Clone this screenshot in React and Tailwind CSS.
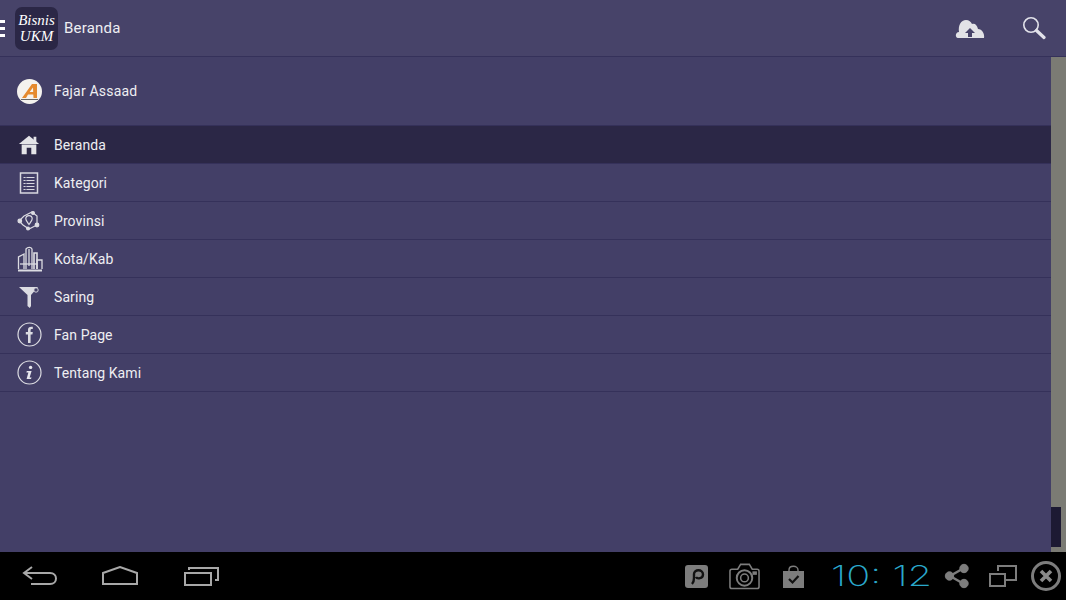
import React from 'react'

const HomeIcon = () => (
  <svg className="-ml-[2px]" width="22" height="22" viewBox="0 0 24 24" fill="#e4e4e8">
    <path d="M12 2 L23 11 L1 11 Z" />
    <rect x="17" y="3" width="3" height="6" />
    <path fillRule="evenodd" d="M4 11.5 H20 V22 H4 Z M9.5 15 V22 H14.5 V15 Z" />
  </svg>
)

const ListIcon = () => (
  <svg className="-ml-[2px]" width="24" height="24" viewBox="0 0 24 24" fill="none" stroke="#d8d8e0">
    <rect x="3.5" y="2" width="17" height="20" strokeWidth="1.5" />
    <path d="M6.5 6.5 H17.5 M6.5 9.5 H17.5 M6.5 12.5 H17.5 M6.5 15.5 H17.5 M6.5 18.5 H17.5" strokeWidth="1.2" />
    <path d="M9 5 V20" stroke="#433f67" strokeWidth="0.8" />
  </svg>
)

const MapIcon = () => (
  <svg className="-ml-[2px]" width="24" height="24" viewBox="0 0 24 24" fill="none" stroke="#dcdce2" strokeWidth="1.2">
    <path d="M7 7 L15 3 L20 7 L20 16 L12 20 L6 16 L2 12 Z" />
    <circle cx="2.8" cy="12" r="1.8" fill="#dcdce2" />
    <circle cx="20" cy="16" r="1.8" fill="#dcdce2" />
    <circle cx="16" cy="4" r="1.4" fill="#dcdce2" />
    <circle cx="11" cy="19.5" r="1.4" fill="#dcdce2" />
    <path d="M12 15.5 C10 12.5 8.8 11.5 8.8 9.8 A3.2 3.2 0 0 1 15.2 9.8 C15.2 11.5 14 12.5 12 15.5 Z" />
  </svg>
)

const CityIcon = () => (
  <svg width="26" height="26" viewBox="0 0 26 26" fill="none" stroke="#dcdce2" strokeWidth="1.3">
    <path d="M1 24.5 H25" strokeWidth="2" />
    <path d="M1.5 23 V11 L7 8 V23" />
    <path d="M9 23 V3 C11 0.5 14 1 15 3 V23" />
    <path d="M12 3 V20" />
    <path d="M17 23 V7 H20 V23" strokeWidth="1.6" />
    <path d="M20 23 V14 H25 V23" />
    <path d="M3 18 H20" />
  </svg>
)

const FunnelIcon = () => (
  <svg className="-ml-[2px]" width="24" height="24" viewBox="0 0 24 24" fill="#dcdce2">
    <path d="M2 2 H21 L14 10 V21 L12.8 23 L10.5 21 V10 Z" />
    <circle cx="19" cy="5" r="2.2" fill="#433f67" stroke="#dcdce2" strokeWidth="0.9" />
  </svg>
)

const FacebookIcon = () => (
  <svg width="25" height="25" viewBox="0 0 25 25" fill="none">
    <circle cx="12.5" cy="12.5" r="11.5" stroke="#dcdce2" strokeWidth="1.2" />
    <path d="M11 21 V12.5 H8.8 V10 H11 V7.8 C11 5.3 12.6 4.4 15.8 4.8 V7 C14 6.8 13.6 7.2 13.6 8.3 V10 H15.8 L15.4 12.5 H13.6 V21 Z" fill="#dcdce2" />
  </svg>
)

const InfoIcon = () => (
  <svg width="25" height="25" viewBox="0 0 25 25" fill="none">
    <circle cx="12.5" cy="12.5" r="11.5" stroke="#dcdce2" strokeWidth="1.2" />
    <circle cx="13.6" cy="7.4" r="1.7" fill="#e8e8ee" />
    <path d="M9.8 11 H14.6 L12.6 17.4 H14.6 L14 19 H9.6 L11.4 12.5 H9.4 Z" fill="#e8e8ee" />
  </svg>
)

const AvatarLogo = () => (
  <svg width="25" height="25" viewBox="0 0 25 25">
    <circle cx="12.5" cy="12.5" r="12.5" fill="#f4f2ee" />
    <path d="M5 19 L15 5 H20 L20 19 H16.5 L16.3 15.5 H11 L9 19 Z M12.6 13 H16.2 L16 8.5 Z" fill="#e58a2e" fillRule="evenodd" />
    <path d="M4 20.5 H21" stroke="#444" strokeWidth="0.8" />
  </svg>
)

const menuItems = [
  { label: 'Beranda', icon: <HomeIcon />, active: true },
  { label: 'Kategori', icon: <ListIcon /> },
  { label: 'Provinsi', icon: <MapIcon /> },
  { label: 'Kota/Kab', icon: <CityIcon /> },
  { label: 'Saring', icon: <FunnelIcon /> },
  { label: 'Fan Page', icon: <FacebookIcon /> },
  { label: 'Tentang Kami', icon: <InfoIcon /> },
]

const MenuRow = ({ item }) => (
  <div
    className={`flex h-[38px] items-center border-b border-[#35315a] ${item.active ? 'bg-[#2b2746]' : ''}`}
  >
    <div className="flex w-[54px] shrink-0 justify-center pl-[5px]">{item.icon}</div>
    <span className="pt-[2px] text-[14px] tracking-[0.08px] text-[#eeeef2]">{item.label}</span>
  </div>
)

const App = () => {
  return (
    <div className="flex h-[600px] w-[1066px] flex-col overflow-hidden bg-[#433f67] font-['Roboto',sans-serif]">
      {/* action bar */}
      <header className="flex h-[57px] shrink-0 items-center border-b border-[#35315a] bg-[#474369]">
        <div className="flex w-[5px] flex-col gap-[4px]">
          <div className="h-[3px] bg-white" />
          <div className="h-[3px] bg-white" />
          <div className="h-[3px] bg-white" />
        </div>
        <div className="ml-[10px] flex h-[43px] w-[43px] flex-col items-center justify-center rounded-[7px] bg-[#2b2746] font-['Liberation_Serif',serif] text-[15px] italic leading-[16px] text-white">
          <span>Bisnis</span>
          <span>UKM</span>
        </div>
        <span className="ml-[6px] text-[15px] tracking-[0.2px] text-[#eeeef2]">Beranda</span>
        <div className="ml-auto flex items-center gap-[37px] pr-[20px]">
          <svg width="30" height="22" viewBox="0 0 30 22" fill="#e2e2e6">
            <path fillRule="evenodd" d="M3 21 C0 21 0 15 4 15 C3 8 6 3 11 3 C14 3 16 5 17 7 C20 6 22 8 23 12 C27 12 30 17 29 21 Z M15 11 L10 16 H13 V20 H17 V16 H20 Z" />
          </svg>
          <svg width="24" height="24" viewBox="0 0 24 24" fill="none" stroke="#e2e2ea">
            <circle cx="9" cy="9" r="7.2" strokeWidth="1.6" />
            <path d="M14.5 14.5 L22 21.5" strokeWidth="3.2" strokeLinecap="round" />
          </svg>
        </div>
      </header>

      <div className="flex min-h-0 flex-1">
        {/* drawer menu */}
        <div className="flex-1">
          <div className="flex h-[69px] items-center border-b border-[#35315a]">
            <div className="flex w-[54px] shrink-0 justify-center pl-[5px]">
              <AvatarLogo />
            </div>
            <span className="text-[14px] tracking-[0.2px] text-[#eeeef2]">Fajar Assaad</span>
          </div>
          {menuItems.map((item) => (
            <MenuRow key={item.label} item={item} />
          ))}
        </div>
        {/* scrollbar */}
        <div className="flex w-[15px] shrink-0 flex-col justify-end bg-[#7b7b74] pb-[5px]">
          <div className="h-[40px] w-[10px] bg-[#1d1a33]" />
        </div>
      </div>

      {/* system bar */}
      <footer className="flex h-[48px] shrink-0 items-center bg-black">
        <svg className="ml-[22px]" width="36" height="24" viewBox="0 0 36 24" fill="none" stroke="#a8a8a8" strokeWidth="2">
          <path d="M10 3 L2 9 L10 15 M2 9 H28 C36 9 36 20 28 20 H9" />
        </svg>
        <svg className="ml-[44px]" width="36" height="20" viewBox="0 0 36 20" fill="none" stroke="#a8a8a8" strokeWidth="2">
          <path d="M1 7 L18 1 L35 7 V18 H1 Z" />
        </svg>
        <svg className="ml-[46px]" width="36" height="20" viewBox="0 0 36 20" fill="none" stroke="#a8a8a8" strokeWidth="2">
          <rect x="1" y="7" width="26" height="12" />
          <path d="M5 4 V2 H34 V14 H31" />
        </svg>

        <div className="ml-[465px] flex items-center">
          <svg width="23" height="23" viewBox="0 0 23 23">
            <rect width="23" height="23" rx="3" fill="#7d7d7d" />
            <path d="M7 19 C9 17 9 15 9 13 V9 C9 4 18 4 18 9.5 C18 14 12 14 11 12" fill="none" stroke="#111" strokeWidth="2.4" />
          </svg>
          <svg className="ml-[21px]" width="31" height="28" viewBox="0 0 32 28" fill="none" stroke="#7d7d7d" strokeWidth="1.6">
            <path d="M3 7 H9 L12 2 H21 L24 7 H29 Q31 7 31 9 V25 Q31 27 29 27 H3 Q1 27 1 25 V9 Q1 7 3 7 Z" />
            <circle cx="16" cy="16" r="8" strokeWidth="2" />
            <circle cx="16" cy="16" r="4" />
            <rect x="25" y="10" width="3" height="2" fill="#7d7d7d" />
          </svg>
          <svg className="ml-[23px]" width="21" height="23" viewBox="0 0 21 23" fill="none">
            <path d="M6 7 V5 C6 0 15 0 15 5 V7" stroke="#7d7d7d" strokeWidth="1.4" />
            <rect y="6" width="21" height="17" fill="#7d7d7d" />
            <path d="M6 14 L9.5 17.5 L15.5 11" stroke="#111" strokeWidth="2.2" />
          </svg>
          <div className="ml-[29px] flex h-[30px] w-[98px] items-center justify-center">
            <span className="inline-block scale-x-[1.42] whitespace-nowrap font-['Inter',sans-serif] text-[28px] font-[200] leading-none text-[#2aa8cc]">
              10: 12
            </span>
          </div>
          <svg className="ml-[13px]" width="26" height="26" viewBox="0 0 26 26" fill="#7d7d7d" stroke="#7d7d7d">
            <path d="M20 5 L6 13 L20 21" fill="none" strokeWidth="2.4" />
            <circle cx="20" cy="5.5" r="4.2" />
            <circle cx="5.5" cy="13" r="4.2" />
            <circle cx="20" cy="20.5" r="4.2" />
          </svg>
          <svg className="ml-[19px]" width="28" height="22" viewBox="0 0 28 22" fill="none" stroke="#7d7d7d" strokeWidth="2">
            <path d="M9 6 V1 H27 V15 H17" />
            <rect x="1" y="9" width="15" height="12" />
          </svg>
          <svg className="ml-[14px]" width="30" height="30" viewBox="0 0 30 30" fill="none" stroke="#7d7d7d">
            <circle cx="15" cy="15" r="13.5" strokeWidth="3" />
            <path d="M10 10 L20 20 M20 10 L10 20" strokeWidth="3.6" stroke="#8a8a8a" />
          </svg>
        </div>
      </footer>
    </div>
  )
}

export default App
